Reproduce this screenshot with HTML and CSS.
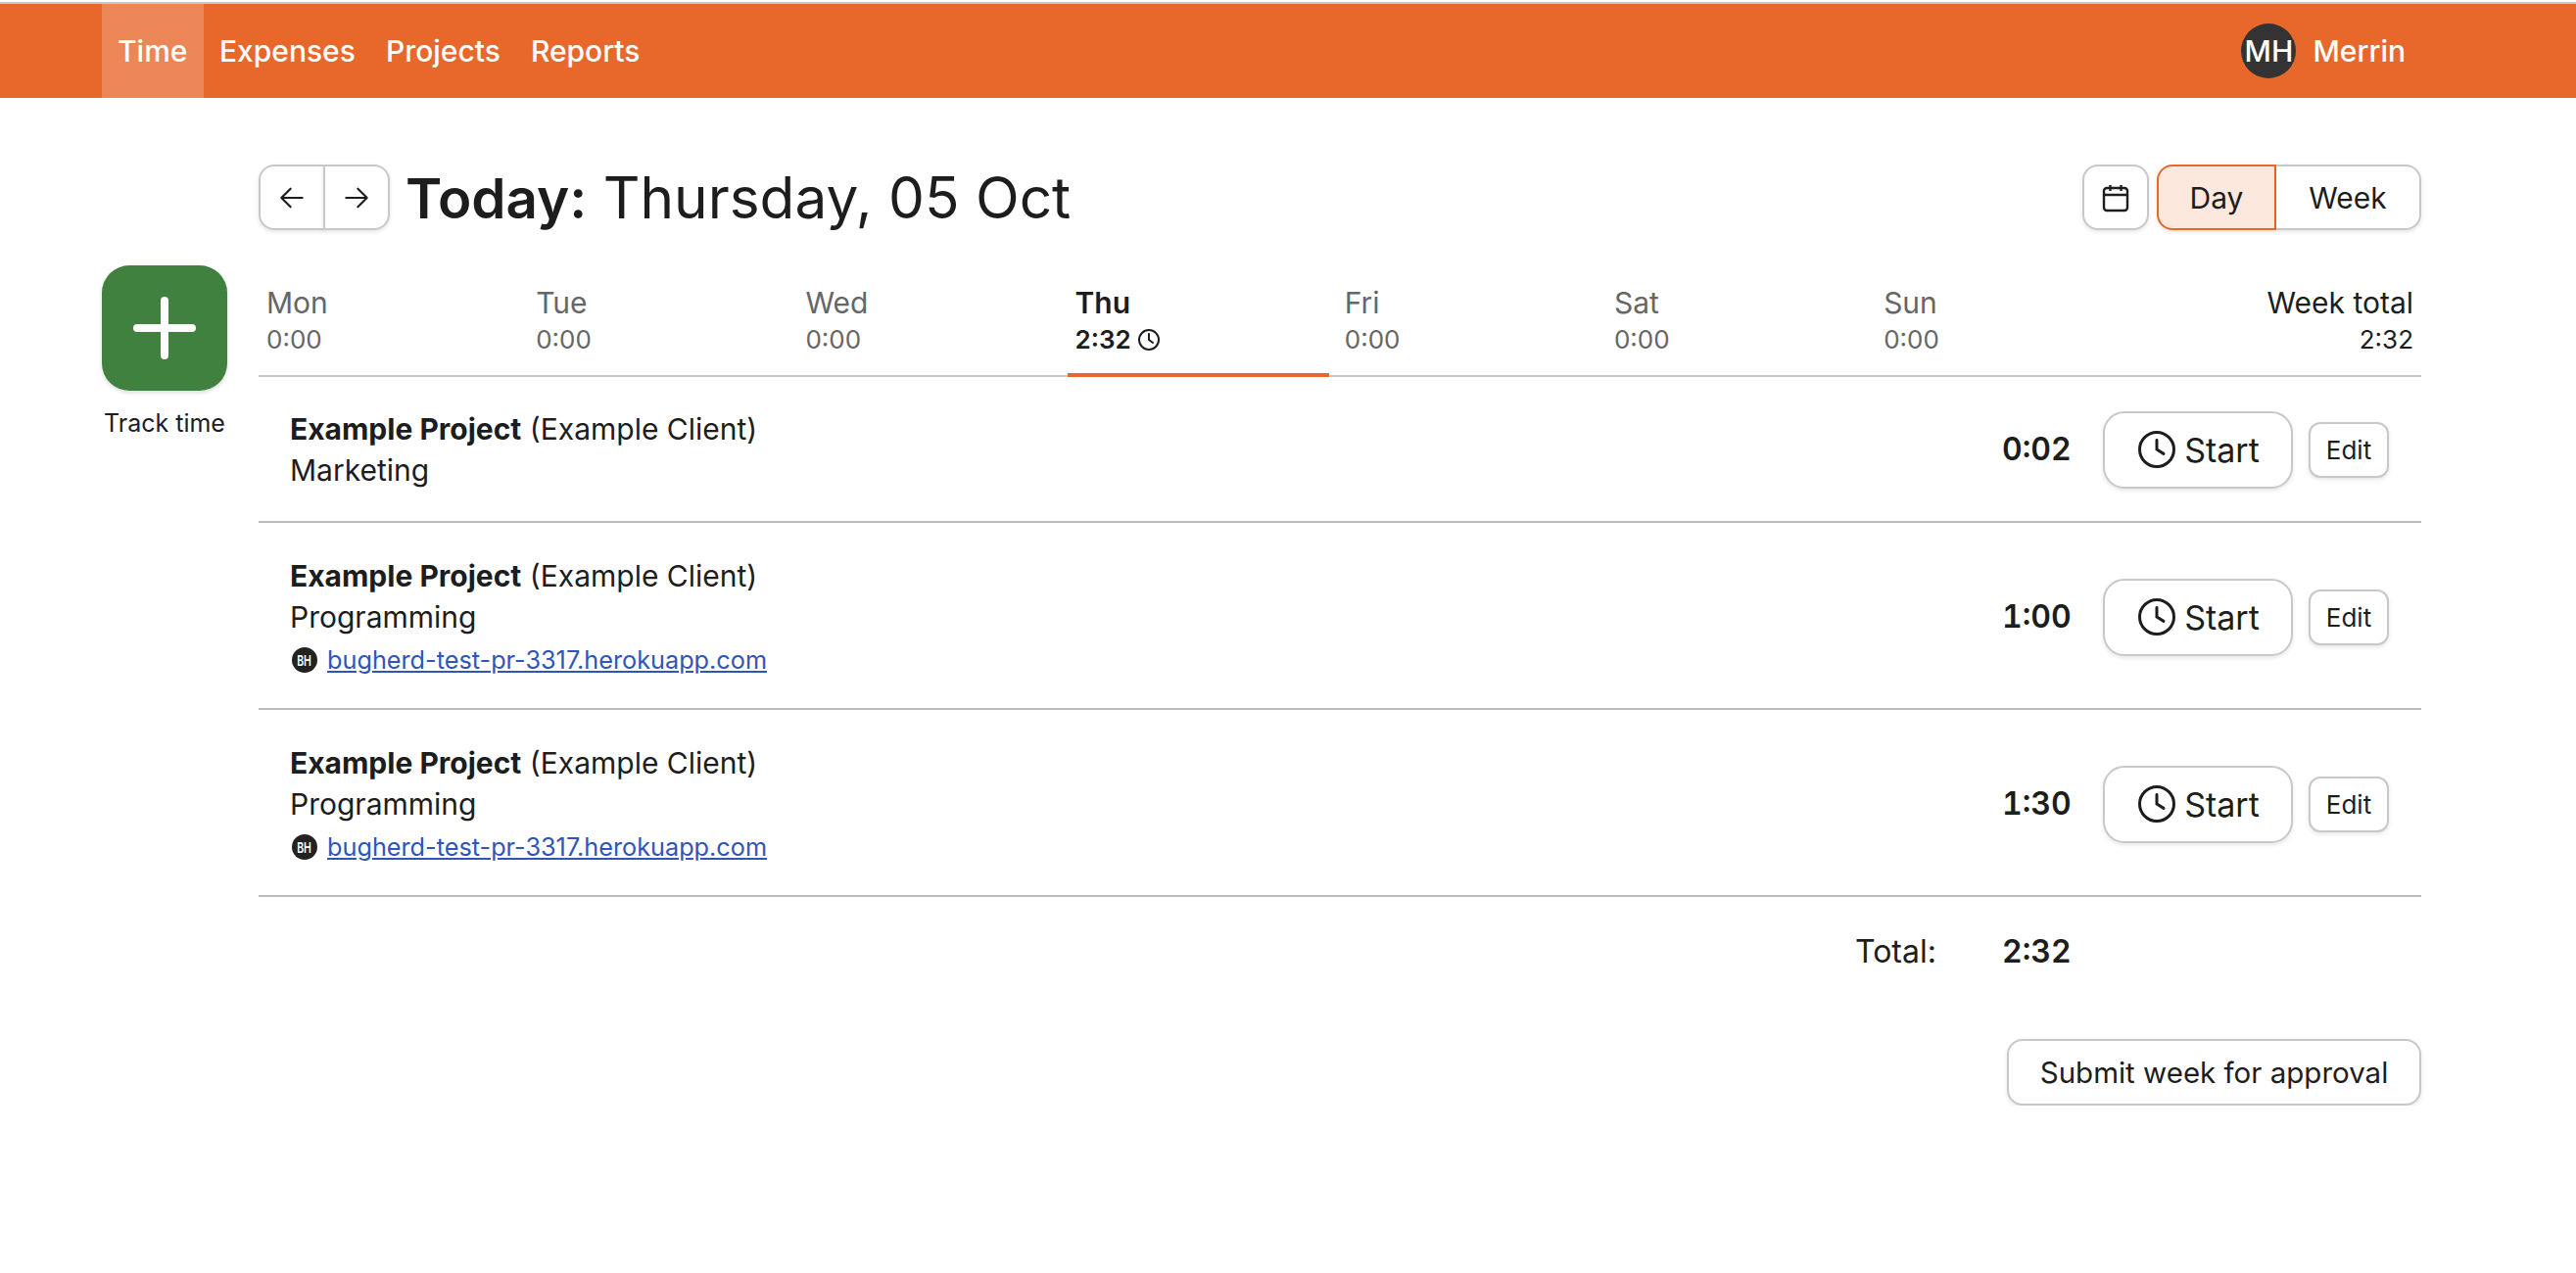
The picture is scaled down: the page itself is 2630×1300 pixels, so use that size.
FILE: index.html
```html
<!DOCTYPE html>
<html>
<head>
  <title>Time</title>
  <link rel="stylesheet" href="styles.css">
</head>
<body>
  <nav class="topnav">
    <div class="nav-links">
      <a class="nav-link active">Time</a>
      <a class="nav-link">Expenses</a>
      <a class="nav-link">Projects</a>
      <a class="nav-link">Reports</a>
    </div>
    <div class="nav-user">
      <span class="avatar">MH</span>
      <span>Merrin</span>
    </div>
  </nav>

  <div class="page">
    <div class="rail">
      <button class="track-btn">
        <svg width="64" height="64" viewBox="0 0 64 64"><path d="M32 4v56M4 32h56" stroke="#fff" stroke-width="8" stroke-linecap="round" fill="none"/></svg>
      </button>
      <div class="track-label">Track time</div>
    </div>

    <main class="main">
      <div class="head">
        <div class="btn-group">
          <button class="btn arrow-btn">
            <svg width="32" height="32" viewBox="0 0 24 24"><path d="M20 12H4M11 5l-7 7 7 7" stroke="#1d1d1d" stroke-width="1.600" stroke-linecap="round" stroke-linejoin="round" fill="none"/></svg>
          </button>
          <button class="btn arrow-btn">
            <svg width="32" height="32" viewBox="0 0 24 24"><path d="M4 12h16M13 5l7 7-7 7" stroke="#1d1d1d" stroke-width="1.600" stroke-linecap="round" stroke-linejoin="round" fill="none"/></svg>
          </button>
        </div>
        <h1 class="title"><b>Today:</b> Thursday, 05 Oct</h1>
        <button class="btn cal-btn">
          <svg width="30" height="30" viewBox="0 0 30 30"><rect x="3" y="5" width="24" height="23" rx="3" stroke="#1d1d1d" stroke-width="2.4" fill="none"/><path d="M3 12h24M9.500 2v6M20.500 2v6" stroke="#1d1d1d" stroke-width="2.400" fill="none"/></svg>
        </button>
        <div class="btn-group view-group">
          <button class="btn view-btn selected">Day</button>
          <button class="btn view-btn">Week</button>
        </div>
      </div>

      <div class="week">
        <div class="day"><div class="day-name">Mon</div><div class="day-time">0:00</div></div>
        <div class="day"><div class="day-name">Tue</div><div class="day-time">0:00</div></div>
        <div class="day"><div class="day-name">Wed</div><div class="day-time">0:00</div></div>
        <div class="day today">
          <div class="day-name">Thu</div>
          <div class="day-time">2:32
            <svg width="24" height="24" viewBox="0 0 24 24"><circle cx="12" cy="12" r="10" stroke="#1d1d1d" stroke-width="2" fill="none"/><path d="M12 6v6l4 3" stroke="#1d1d1d" stroke-width="2" stroke-linecap="round" fill="none"/></svg>
          </div>
        </div>
        <div class="day"><div class="day-name">Fri</div><div class="day-time">0:00</div></div>
        <div class="day"><div class="day-name">Sat</div><div class="day-time">0:00</div></div>
        <div class="day"><div class="day-name">Sun</div><div class="day-time">0:00</div></div>
        <div class="day week-total"><div class="day-name">Week total</div><div class="day-time">2:32</div></div>
      </div>

      <div class="entry first">
        <div class="entry-info">
          <div><b>Example Project</b> (Example Client)</div>
          <div>Marketing</div>
        </div>
        <div class="entry-hours">0:02</div>
        <button class="btn start-btn">
          <svg width="42" height="42" viewBox="0 0 24 24"><circle cx="12" cy="12" r="10" stroke="#1d1d1d" stroke-width="1.700" fill="none"/><path d="M12 6.500V12l4 2.500" stroke="#1d1d1d" stroke-width="1.700" stroke-linecap="round" fill="none"/></svg>
          Start
        </button>
        <button class="btn edit-btn">Edit</button>
      </div>

      <div class="entry">
        <div class="entry-info">
          <div><b>Example Project</b> (Example Client)</div>
          <div>Programming</div>
          <div class="entry-link"><span class="bh-icon"><span>BH</span></span><a href="#">bugherd-test-pr-3317.herokuapp.com</a></div>
        </div>
        <div class="entry-hours">1:00</div>
        <button class="btn start-btn">
          <svg width="42" height="42" viewBox="0 0 24 24"><circle cx="12" cy="12" r="10" stroke="#1d1d1d" stroke-width="1.700" fill="none"/><path d="M12 6.500V12l4 2.500" stroke="#1d1d1d" stroke-width="1.700" stroke-linecap="round" fill="none"/></svg>
          Start
        </button>
        <button class="btn edit-btn">Edit</button>
      </div>

      <div class="entry">
        <div class="entry-info">
          <div><b>Example Project</b> (Example Client)</div>
          <div>Programming</div>
          <div class="entry-link"><span class="bh-icon"><span>BH</span></span><a href="#">bugherd-test-pr-3317.herokuapp.com</a></div>
        </div>
        <div class="entry-hours">1:30</div>
        <button class="btn start-btn">
          <svg width="42" height="42" viewBox="0 0 24 24"><circle cx="12" cy="12" r="10" stroke="#1d1d1d" stroke-width="1.700" fill="none"/><path d="M12 6.500V12l4 2.500" stroke="#1d1d1d" stroke-width="1.700" stroke-linecap="round" fill="none"/></svg>
          Start
        </button>
        <button class="btn edit-btn">Edit</button>
      </div>

      <div class="total-row">
        <span class="total-label">Total:</span>
        <span class="total-hours">2:32</span>
      </div>

      <div class="submit-row">
        <button class="btn submit-btn">Submit week for approval</button>
      </div>
    </main>
  </div>
</body>
</html>
```

FILE: styles.css
```css
* {
  box-sizing: border-box;
}
body {
  margin: 0;
  padding-top: 2px;
  font-family: Inter, "Liberation Sans", sans-serif;
  font-size: 30px;
  color: #1d1d1d;
  background-color: #fff;
}
.topnav {
  display: flex;
  justify-content: space-between;
  height: 98px;
  padding: 0 174px 0 104px;
  border-top: 2px solid #c8c8c8;
  background-color: #e8682b;
  color: #fff;
  font-size: 30px;
  font-weight: 500;
}
.nav-links {
  display: flex;
}
.nav-link {
  display: flex;
  align-items: center;
  padding: 0 15.500px;
}
.nav-link.active {
  padding: 0 17px 0 16px;
  background-color: #ed8656;
}
.nav-user {
  display: flex;
  align-items: center;
  gap: 17px;
}
.avatar {
  display: flex;
  align-items: center;
  justify-content: center;
  width: 56px;
  height: 56px;
  border-radius: 50%;
  background-color: #333;
}
.page {
  display: flex;
  padding: 68px 158px 0 104px;
}
.rail {
  width: 160px;
  padding-top: 103px;
}
.track-btn {
  display: flex;
  align-items: center;
  justify-content: center;
  width: 128px;
  height: 128px;
  padding: 0;
  border: none;
  border-radius: 28px;
  background-color: #40813f;
  box-shadow: 0 2px 4px rgba(0,0,0,0.15);
}
.track-label {
  width: 128px;
  margin-top: 18px;
  text-align: center;
  font-size: 25px;
  white-space: nowrap;
}
.main {
  flex: 1;
}
.btn {
  border: 2px solid #c8c8c8;
  border-radius: 16px;
  background-color: #fff;
  color: #1d1d1d;
  font-family: inherit;
  box-shadow: 0 2px 4px rgba(0,0,0,0.1);
}
.head {
  display: flex;
  align-items: center;
  height: 67px;
}
.btn-group {
  display: flex;
  height: 67px;
}
.arrow-btn {
  display: flex;
  align-items: center;
  justify-content: center;
  width: 68px;
  padding: 0;
}
.arrow-btn:first-child {
  border-radius: 16px 0 0 16px;
}
.arrow-btn:last-child {
  margin-left: -2px;
  border-radius: 0 16px 16px 0;
}
.title {
  flex: 1;
  margin: 0 0 0 16px;
  font-size: 58.500px;
  font-weight: 400;
}
.title b {
  font-size: 56.500px;
  font-weight: 600;
}
.cal-btn {
  display: flex;
  align-items: center;
  justify-content: center;
  width: 68px;
  height: 67px;
  padding: 0;
}
.view-group {
  margin-left: 8px;
}
.view-btn {
  width: 148px;
  padding: 0;
  border-left: none;
  border-radius: 0 16px 16px 0;
  font-size: 30px;
}
.view-btn.selected {
  width: 122px;
  border: 2px solid #e8682b;
  border-radius: 16px 0 0 16px;
  background-color: #fce8dc;
}
.week {
  display: flex;
  height: 114px;
  margin-top: 36px;
  border-bottom: 2px solid #c8c8c8;
}
.day {
  width: 267.200px;
  margin-right: 8px;
  padding: 20px 8px 0;
  color: #666;
}
.day-name {
  font-size: 30px;
  line-height: 36px;
}
.day-time {
  display: flex;
  align-items: center;
  gap: 6px;
  margin-top: 4px;
  font-size: 26px;
  line-height: 32px;
}
.day.today {
  height: 114px;
  border-bottom: 4px solid #e8682b;
  color: #1d1d1d;
  font-weight: 600;
}
.day.week-total {
  flex: 1;
  margin-right: 0;
  color: #1d1d1d;
  text-align: right;
}
.week-total .day-time {
  justify-content: flex-end;
}
.entry {
  display: flex;
  align-items: center;
  padding: 33px 33px 30px 32px;
  border-bottom: 2px solid #bbb;
  line-height: 42px;
}
.entry.first {
  padding: 32px 33px 31px 32px;
}
.entry-info {
  flex: 1;
}
.entry-info b {
  font-weight: 700;
}
.entry-link {
  display: flex;
  align-items: center;
  gap: 10px;
  height: 42px;
  padding-top: 4px;
  font-size: 25.250px;
  line-height: 42px;
}
.entry-link a {
  color: #2f55b8;
}
.bh-icon {
  display: flex;
  align-items: center;
  justify-content: center;
  width: 26px;
  height: 26px;
  margin-left: 2px;
  border-radius: 50%;
  background-color: #222;
  color: #fff;
  font-size: 15px;
  font-weight: 600;
  line-height: 1;
}
.bh-icon span {
  transform: scaleX(0.7);
}
.entry-hours {
  width: 70px;
  font-size: 32px;
  font-weight: 600;
  font-variant-numeric: tabular-nums;
}
.start-btn {
  display: flex;
  align-items: center;
  justify-content: center;
  gap: 7px;
  width: 194px;
  height: 79px;
  margin-left: 33px;
  padding: 0;
  border-radius: 22px;
  font-size: 34px;
}
.edit-btn {
  width: 82px;
  height: 57px;
  margin-left: 16px;
  padding: 0;
  border-radius: 12px;
  font-size: 26px;
}
.total-row {
  display: flex;
  align-items: center;
  height: 110px;
  padding-left: 1630px;
}
.total-label {
  width: 150px;
  font-size: 32px;
}
.total-hours {
  font-size: 32px;
  font-weight: 600;
  font-variant-numeric: tabular-nums;
}
.submit-row {
  display: flex;
  justify-content: flex-end;
  margin-top: 35px;
}
.submit-btn {
  width: 423px;
  height: 68px;
  padding: 0;
  font-size: 29.500px;
}
```
